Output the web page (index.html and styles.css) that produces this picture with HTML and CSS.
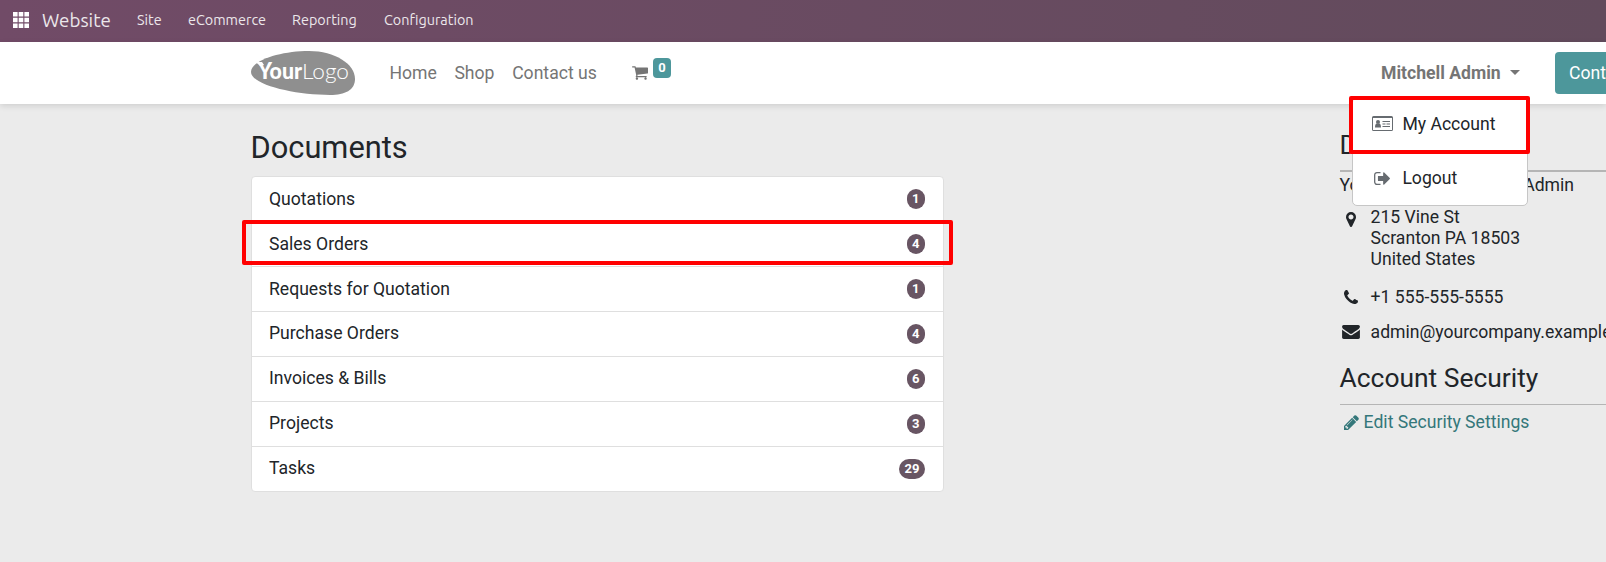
FILE: index.html
```html
<!DOCTYPE html>
<html lang="en">
<head>
<meta charset="utf-8">
<title>My Portal</title>
<link rel="stylesheet" href="styles.css">
</head>
<body>
<nav class="topbar">
  <svg class="apps" viewBox="0 0 16 16"><path d="M0 0h4.6v4.6H0zM5.7 0h4.6v4.6H5.7zM11.4 0H16v4.6h-4.6zM0 5.7h4.6v4.6H0zM5.7 5.7h4.6v4.6H5.7zM11.4 5.7H16v4.6h-4.6zM0 11.4h4.6V16H0zM5.7 11.4h4.6V16H5.7zM11.4 11.4H16V16h-4.6z"/></svg>
  <span class="brand">Website</span>
  <span class="t-site">Site</span><span class="t-ecom">eCommerce</span><span class="t-rep">Reporting</span><span class="t-conf">Configuration</span>
</nav>
<header class="header">
  <svg class="logo" viewBox="0 0 104 44">
    <path d="M0 21C0 9 30 0 58 0c26 0 46 13 46 28 0 11-10 16-25 16C44 44 0 34 0 21z" fill="#8f8f8f"/>
    <path d="M4 11h7l2 3-4 1-2-2z" fill="#fff"/>
    <text class="logo-bold" x="7" y="28" textLength="44" lengthAdjust="spacingAndGlyphs">Your</text>
    <text class="logo-thin" x="51" y="28" textLength="47" lengthAdjust="spacingAndGlyphs">Logo</text>
  </svg>
  <div class="links"><span>Home</span><span>Shop</span><span>Contact us</span></div>
  <svg class="cart" viewBox="64 256 1664 1408"><path d="M704 1536q0 52-38 90t-90 38-90-38-38-90 38-90 90-38 90 38 38 90zm896 0q0 52-38 90t-90 38-90-38-38-90 38-90 90-38 90 38 38 90zm128-1088v512q0 24-16.500 42.500t-40.500 21.500l-1044 122q13 60 13 70 0 16-24 64h920q26 0 45 19t19 45-19 45-45 19h-1024q-26 0-45-19t-19-45q0-11 8-31.500t16-36 21.500-40 15.500-29.500l-177-823h-204q-26 0-45-19t-19-45 19-45 45-19h256q16 0 28.500 6.500t19.500 15.500 13 24.500 8 26 5.500 29.500 4.500 26h1201q26 0 45 19t19 45z"/></svg>
  <span class="cart-count">0</span>
  <div class="user">
    <span>Mitchell Admin</span><i class="caret"></i>
    <div class="menu">
      <div class="menu-item"><svg class="i-card" viewBox="0 0 21 15"><path fill-rule="evenodd" d="M1.500 0h18A1.500 1.500 0 0 1 21 1.500v12a1.500 1.500 0 0 1-1.500 1.500h-18A1.500 1.500 0 0 1 0 13.500v-12A1.500 1.500 0 0 1 1.500 0zM1 2v12h19V2z"/><circle cx="6" cy="6" r="2"/><path d="M3 11.500c0-2.500.8-4 1.800-4 .7.600 1.700.6 2.400 0 1 0 1.800 1.500 1.800 4zM10.500 5H18v1h-7.500zM10.500 7.500h3v1h-3zM14.500 7.500H18v1h-3.500zM10.500 10H18v1h-7.500z"/></svg><span>My Account</span></div>
      <div class="menu-item"><svg class="i-out" viewBox="64 256 1568 1280"><path d="M704 1440q0 4 1 20t.5 26.500-3 23.500-10 19.500-20.500 6.500h-320q-119 0-203.500-84.500t-84.500-203.500v-704q0-119 84.500-203.500t203.500-84.500h320q13 0 22.500 9.500t9.500 22.500q0 4 1 20t.5 26.500-3 23.500-10 19.500-20.500 6.500h-320q-66 0-113 47t-47 113v704q0 66 47 113t113 47h312l11.500 1 11.500 3 8 5.500 7 9 2 13.500zm928-544q0 26-19 45l-544 544q-19 19-45 19t-45-19-19-45v-288h-448q-26 0-45-19t-19-45v-384q0-26 19-45t45-19h448v-288q0-26 19-45t45-19 45 19l544 544q19 19 19 45z"/></svg><span>Logout</span></div>
      <div class="mark mark-account"></div>
    </div>
  </div>
  <div class="contact-btn">Contact Us</div>
</header>
<main class="page">
  <section class="docs">
    <h3>Documents</h3>
    <div class="list">
      <div class="row"><span>Quotations</span><b>1</b></div>
      <div class="row"><span>Sales Orders</span><b>4</b><div class="mark mark-row"></div></div>
      <div class="row"><span>Requests for Quotation</span><b>1</b></div>
      <div class="row"><span>Purchase Orders</span><b>4</b></div>
      <div class="row"><span>Invoices &amp; Bills</span><b>6</b></div>
      <div class="row"><span>Projects</span><b>3</b></div>
      <div class="row"><span>Tasks</span><b>29</b></div>
    </div>
  </section>
  <aside class="side">
    <h4>Details</h4>
    <hr class="rule-top">
    <div class="company">YourCompany, Mitchell Admin</div>
    <div class="info"><div class="ico"><svg class="i-pin" viewBox="384 128 1024 1536"><path d="M1152 640q0-106-75-181t-181-75-181 75-75 181 75 181 181 75 181-75 75-181zm256 0q0 109-33 179l-364 774q-16 33-47.500 52t-67.500 19-67.500-19-46.500-52l-365-774q-33-70-33-179 0-212 150-362t362-150 362 150 150 362z"/></svg></div><div>215 Vine St<br>Scranton PA 18503<br>United States</div></div>
    <div class="info phone"><div class="ico"><svg class="i-phone" viewBox="192 128 1408 1408"><path d="M1600 1240q0 27-10 70.500t-21 68.500q-21 50-122 106-94 51-186 51-27 0-53-3.500t-57.500-12.500-47-14.500-55.500-20.500-49-18q-98-35-175-83-127-79-264-216t-216-264q-48-77-83-175-3-9-18-49t-20.500-55.500-14.500-47-12.500-57.500-3.500-53q0-92 51-186 56-101 106-122 25-11 68.500-21t70.500-10q14 0 21 3 18 6 53 76 11 19 30 54t35 63.500 31 53.500q3 4 17.500 25t21.500 35.500 7 28.500q0 20-28.500 50t-62 55-62 53-28.500 46q0 9 5 22.500t8.500 20.500 14 24 11.500 19q76 137 174 235t235 174q2 1 19 11.500t24 14 20.500 8.500 22.500 5q18 0 46-28.500t53-62 55-62 50-28.500q14 0 28.500 7t35.500 21.500 25 17.500q25 15 53.500 31t63.500 35 54 30q70 35 76 53 3 7 3 21z"/></svg></div><div>+1 555-555-5555</div></div>
    <div class="info mail"><div class="ico"><svg class="i-mail" viewBox="0 256 1792 1408"><path d="M1792 710v794q0 66-47 113t-113 47h-1472q-66 0-113-47t-47-113v-794q44 49 101 87 362 246 497 345 57 42 92.500 65.500t94.500 48 110 24.500h2q51 0 110-24.500t94.500-48 92.500-65.500q170-123 498-345 57-39 100-87zm0-294q0 79-49 151t-122 123q-376 261-468 325-10 7-42.500 31t-54 38.500-52 32.500-57.500 27-50 9h-2q-23 0-50-9t-57.500-27-52-32.500-54-38.500-42.500-31q-91-64-262-182.500t-205-142.500q-62-42-117-115.500t-55-136.500q0-78 41.500-130t118.500-52h1472q65 0 112.500 47t47.500 113z"/></svg></div><div>admin@yourcompany.example.com</div></div>
    <h4 class="security">Account Security</h4>
    <hr>
    <div class="edit"><svg class="i-pencil" viewBox="128 128 1536 1536"><path d="M491 1536l91-91-235-235-91 91v107h128v128h107zm523-928q0-22-22-22-10 0-17 7l-542 542q-7 7-7 17 0 22 22 22 10 0 17-7l542-542q7-7 7-17zm-54-192l416 416-832 832h-416v-416zm683 96q0 53-37 90l-166 166-416-416 166-165q36-38 90-38 53 0 91 38l235 234q37 39 37 91z"/></svg><span>Edit Security Settings</span></div>
  </aside>
</main>
</body>
</html>
```
FILE: styles.css
```css
* { box-sizing: border-box; }
body { margin: 0; height: 562px; overflow: hidden; background: #ebebeb; color: #212529; font: 17.6px/21px Roboto, sans-serif; display: flex; flex-direction: column; }
svg { display: block; flex: none; fill: currentColor; }
h3, h4 { margin: 0; font-weight: 400; }
.topbar { height: 42px; flex: none; display: flex; align-items: center; padding: 0 0 2px 13px; background: linear-gradient(90deg, #714b67, #624b5c); color: #ece7eb; font: 14.4px/20px Ubuntu, "Noto Sans", sans-serif; white-space: nowrap; }
.apps { width: 16px; height: 16px; color: #fff; }
.brand { margin-left: 13px; width: 95px; font-size: 18.8px; }
.t-site { width: 51px; }
.t-ecom { width: 104px; }
.t-rep { width: 92px; }
.header { height: 62px; flex: none; display: flex; align-items: flex-start; position: relative; z-index: 2; padding-left: 251px; background: #fff; color: #757575; box-shadow: 0 2px 6px rgba(0,0,0,.12); white-space: nowrap; }
.header > * { flex: none; }
.logo { width: 104px; height: 44px; margin-top: 9px; }
.logo-bold { font: 900 22px Lato, sans-serif; fill: #fff; }
.logo-thin { font: 300 22px Lato, sans-serif; fill: #fff; }
.links { display: flex; gap: 17.7px; margin: 21px 0 0 34.4px; width: 242.6px; }
.cart { width: 16px; height: 14px; margin-top: 24px; }
.cart-count { width: 18px; height: 20px; margin: 16px 0 0 5px; border-radius: 4px; background: #4d979b; color: #fff; font-size: 13px; font-weight: 700; line-height: 20px; text-align: center; }
.user { position: relative; display: flex; margin: 21px 0 0 710px; width: 174px; font-weight: 700; }
.caret { margin: 7px 0 0 9px; width: 0; height: 0; border: 5px solid transparent; border-top-color: currentColor; border-bottom: 0; }
.contact-btn { width: 120px; height: 42px; margin-top: 10px; padding: 11px 14px; border-radius: 4px; background: #4d979b; color: #fff; }
.menu { position: absolute; left: -29px; top: 34px; width: 176px; height: 109px; border: 1px solid #c6c6c6; border-radius: 5px; background: #fff; color: #212529; font-weight: 400; padding-top: 16px; }
.menu-item { display: flex; align-items: center; height: 21px; margin-bottom: 33px; padding-left: 19px; }
.menu-item span { margin-left: 9.4px; }
.menu-item svg { color: #666b70; }
.i-card { width: 21px; height: 15px; margin-bottom: 2px; }
.i-out { width: 16px; height: 13px; margin: 0 3px 1px 2px; }
.mark { position: absolute; border: 4px solid #f00; border-radius: 2px; }
.mark-account { left: -4px; top: -2px; width: 181px; height: 58px; }
.page { display: flex; flex: 1; padding-left: 251px; }
.docs { width: 693px; flex: none; padding-top: 25px; }
.docs h3 { font-size: 30.8px; line-height: 38px; margin: 0 0 9px -.5px; }
.list { border: 1px solid #dfdfdf; border-radius: 4px; background: #fff; }
.row { position: relative; display: flex; align-items: center; justify-content: space-between; height: 45px; padding: 0 18px 0 17px; border-bottom: 1px solid #dfdfdf; }
.row:last-child { border: 0; height: 44px; }
.row span { margin: -1px 0 1px; }
.row:nth-child(-n+3) span { margin: 0; }
.row b { min-width: 18px; height: 20px; padding: 0 5.5px; border-radius: 10px; background: #685563; color: #fff; font-size: 13px; line-height: 20px; text-align: center; }
.mark-row { left: -10px; top: -2px; width: 711px; height: 45px; }
.side { margin-left: 395.6px; width: 330px; flex: none; white-space: nowrap; padding-top: 24px; }
.side h4 { font-size: 26.4px; line-height: 34px; }
.side hr { margin: 8px 0 0; border: 0; height: 1px; background: #b5b5b5; }
.side .rule-top { height: 2px; }
.company { margin: 3px 0 11px; }
.info { display: flex; }
.ico { width: 31px; height: 21px; }
.i-pin { width: 10px; height: 15px; margin: 5px 0 0 6px; }
.i-phone { width: 14px; height: 14px; margin: 3px 0 0 4px; }
.i-mail { width: 18px; height: 14px; margin: 3px 0 0 2px; }
.phone { margin-top: 17px; }
.mail { margin-top: 14px; }
.side .security { margin-top: 18px; }
.side .security + hr { margin-top: 9px; }
.edit { display: flex; align-items: center; margin-top: 7px; padding-left: 4px; color: #34777a; }
.i-pencil { width: 15px; height: 15px; margin: 0 5px 1px 0; }
```
